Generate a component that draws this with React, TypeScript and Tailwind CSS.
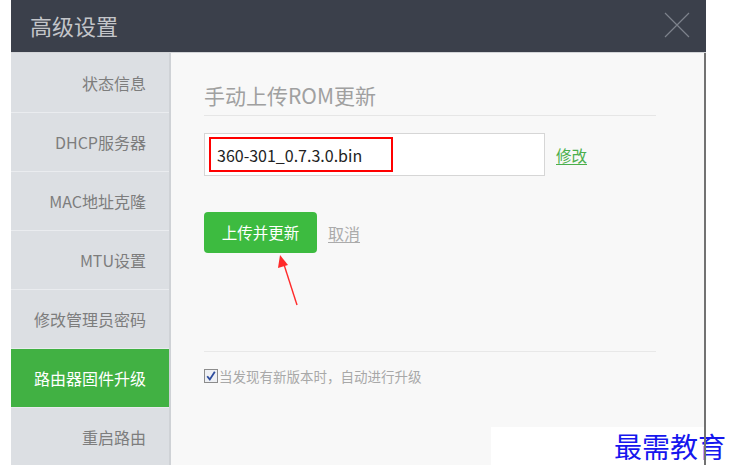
import React from "react";

const items = [
  "状态信息",
  "DHCP服务器",
  "MAC地址克隆",
  "MTU设置",
  "修改管理员密码",
  "路由器固件升级",
  "重启路由",
];

export default function App() {
  return (
    <div
      className="relative w-[737px] h-[465px] bg-white overflow-hidden"
      style={{ fontFamily: '"Noto Sans CJK SC", "Noto Sans", sans-serif' }}
    >
      <div className="ml-[11px] w-[695px] h-full flex flex-col">
        <header className="h-[53px] shrink-0 bg-[#3b404b] border-b border-[#d3d5d8] flex items-center justify-between pl-[19px] pr-[16px]">
          <span className="text-[22px] leading-[30px] text-[#c3c5c9] mb-[2px]">高级设置</span>
          <svg width="26" height="26" viewBox="0 0 26 26" className="mb-[3px]">
            <path d="M1 1 L25 25 M25 1 L1 25" stroke="#7d828b" strokeWidth="1.2" fill="none" />
          </svg>
        </header>
        <div className="flex flex-1">
          <nav className="w-[160px] shrink-0 bg-[#dcdfe3] border-r-2 border-[#cfd2d6] pt-[1px]">
            {items.map((t, i) => {
              const active = i === 5;
              return (
                <div
                  key={t}
                  className={
                    active
                      ? "h-[59px] flex items-center justify-end pr-[23px] bg-[#41b143] text-white text-[16px] border-b border-[#e8eaed]"
                      : "h-[59px] flex items-center justify-end pr-[23px] text-[#7d7d7d] text-[16px] border-b border-[#eaecef]"
                  }
                >
                  {t}
                </div>
              );
            })}
          </nav>
          <main className="flex-1 bg-[#f8f8f8] border-r-2 border-[#727272] pl-[33px] pr-[48px]">
            <div className="mt-[28px] h-[35px] border-b border-[#e6e6e6] text-[21px] leading-[28px] text-[#a0a0a0]">
              手动上传ROM更新
            </div>
            <div className="mt-[17px] flex items-center">
              <div className="w-[341px] h-[43px] bg-white border border-[#d6d6d6] flex items-center pl-[4px]">
                <div className="w-[184px] h-[35px] border-2 border-[#ff0000] flex items-center pl-[6px] text-[16px] text-[#222]">
                  360-301_0.7.3.0.bin
                </div>
              </div>
              <a className="ml-[11px] text-[15.5px] text-[#4caf4c] underline underline-offset-2 mt-[2px]">修改</a>
            </div>
            <div className="mt-[36px] flex items-center">
              <button className="w-[113px] h-[41px] rounded-[4px] bg-[#3dbb40] text-white text-[15.5px]">
                上传并更新
              </button>
              <a className="ml-[11px] text-[16px] text-[#ababab] underline underline-offset-2">取消</a>
            </div>
            <div className="mt-[98px] border-t border-[#e8e8e8]" />
            <div className="mt-[17px] flex items-center h-[14px]">
              <svg width="14" height="14" viewBox="0 0 14 14">
                <rect x="0.5" y="0.5" width="13" height="13" fill="#eef0f4" stroke="#8c8c8c" />
                <path d="M3.2 7.2 L5.8 10.4 L10.8 2.8" stroke="#2d4c9e" strokeWidth="1.8" fill="none" />
              </svg>
              <span className="ml-[1px] text-[13.5px] leading-[14px] text-[#a8a8a8]">
                当发现有新版本时，自动进行升级
              </span>
            </div>
          </main>
        </div>
      </div>

      <svg className="absolute left-[270px] top-[248px]" width="40" height="64" viewBox="0 0 40 64">
        <path d="M27 57 L13.5 15" stroke="#ff2a2a" strokeWidth="1.4" fill="none" />
        <path d="M10 7 L8 20 L18 17 Z" fill="#ff2a2a" />
      </svg>

      <div className="absolute left-[491px] top-[427px] w-[246px] h-[38px] bg-white flex items-center pl-[123px]">
        <span
          className="text-[28px] leading-[36px] text-[#1616ee]"
          style={{ fontFamily: '"Noto Sans CJK SC", serif', fontWeight: 400 }}
        >
          最需教育
        </span>
      </div>
      <div className="absolute left-[704px] top-[427px] w-[2px] h-[38px] bg-[#727272]" />
    </div>
  );
}
